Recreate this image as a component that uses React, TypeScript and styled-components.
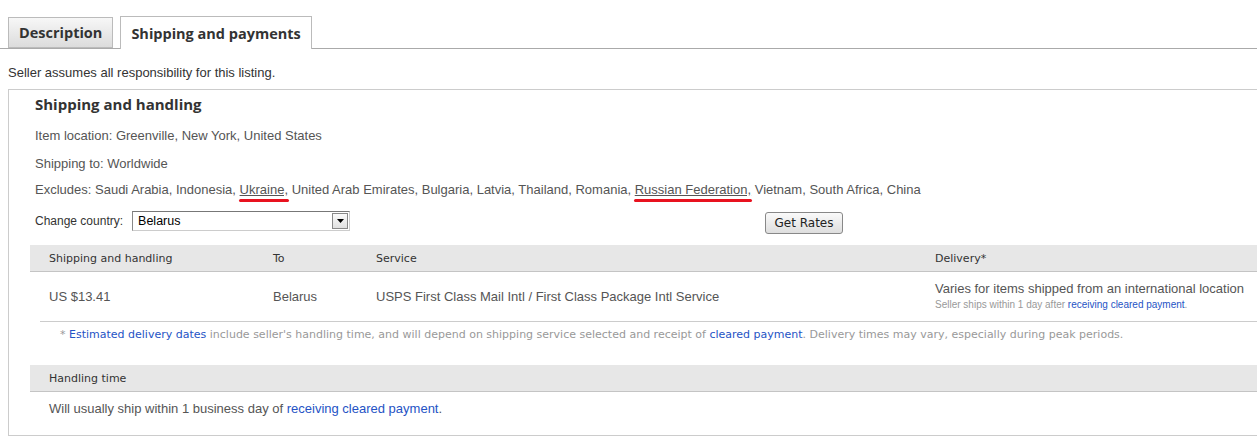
import React from 'react';
import styled, { createGlobalStyle } from 'styled-components';

const GlobalStyle = createGlobalStyle`
  html, body {
    margin: 0;
    padding: 0;
    background: #fff;
    overflow: hidden;
  }
  body {
    font-family: "Liberation Sans", Arial, sans-serif;
    font-size: 13px;
    color: #333;
  }
`;

const Page = styled.div`
  width: 1257px;
  padding-top: 16px;
`;

const TabBar = styled.div`
  display: flex;
  align-items: flex-end;
  gap: 7px;
  padding-left: 8px;
  border-bottom: 1px solid #aaa;
  height: 32px;
`;

const Tab = styled.div<{ $active?: boolean }>`
  height: ${p => (p.$active ? '33px' : '31px')};
  margin-bottom: ${p => (p.$active ? '-1px' : '0')};
  box-sizing: border-box;
  padding: 0 10px;
  display: flex;
  align-items: center;
  border: 1px solid #bbb;
  border-bottom: ${p => (p.$active ? 'none' : '1px solid #bbb')};
  background: ${p => (p.$active ? '#fff' : 'linear-gradient(#f7f7f7, #dcdcdc)')};
  font-family: "Open Sans", "DejaVu Sans", sans-serif;
  font-weight: 700;
  font-size: 14.5px;
  color: #333;
  cursor: pointer;
`;

const Notice = styled.p`
  margin: 16px 0 0 8px;
  line-height: 16px;
  color: #333;
`;

const Box = styled.div`
  margin: 8px 0 0 8px;
  width: 1280px;
  height: 347px;
  box-sizing: border-box;
  border: 1px solid #ccc;
  padding: 0 0 0 21px;
`;

const Info = styled.div`
  padding-left: 5px;
`;

const Heading = styled.h2`
  margin: 4px 0 0;
  line-height: 20px;
  font-family: "Open Sans", "DejaVu Sans", sans-serif;
  font-weight: 700;
  font-size: 15px;
  color: #333;
`;

const Line = styled.p`
  margin: 0;
  height: 26px;
  line-height: 16px;
  padding-top: 8px;
  box-sizing: border-box;
  color: #555;
`;

const FirstLine = styled(Line)`
  padding-top: 14px;
  height: 34px;
`;

const Excluded = styled.span`
  position: relative;
  text-decoration: underline;
  text-underline-offset: 1px;

  &::after {
    content: '';
    position: absolute;
    left: -1px;
    right: -1px;
    bottom: -5px;
    height: 3px;
    border-radius: 2px;
    background: #e8121f;
  }
`;

const CountryRow = styled.div`
  display: grid;
  grid-template-columns: 730px auto;
  justify-content: start;
  align-items: start;
  margin-top: 11px;
`;

const CountryField = styled.label`
  display: flex;
  align-items: center;
  gap: 9px;
  color: #333;
  font-size: 12px;
`;

const Select = styled.div`
  width: 218px;
  height: 20px;
  box-sizing: border-box;
  border: 1px solid #ccc;
  border-top-color: #777;
  border-left-color: #888;
  display: flex;
  align-items: center;
  justify-content: space-between;
  padding-left: 5px;
  color: #000;
  font-size: 12.5px;
`;

const SelectArrow = styled.div`
  width: 16px;
  height: 16px;
  margin-right: 1px;
  box-sizing: border-box;
  border: 1px solid #888;
  background: linear-gradient(#fafafa, #e0e0e0);
  display: flex;
  align-items: center;
  justify-content: center;
`;

const Button = styled.button`
  justify-self: start;
  margin-top: 1px;
  width: 78px;
  height: 22px;
  padding: 0;
  border: 1px solid #888;
  border-radius: 3px;
  background: linear-gradient(#fafafa, #dedede);
  font-family: "DejaVu Sans", Tahoma, sans-serif;
  font-size: 12px;
  color: #222;
`;

const Table = styled.div`
  margin-top: 11px;
`;

const HeaderRow = styled.div<{ $cols?: string }>`
  display: grid;
  grid-template-columns: ${p => p.$cols || '1fr'};
  height: 27px;
  box-sizing: border-box;
  background: #e7e7e7;
  border-bottom: 1px solid #c4c4c4;
  align-items: center;
  font-family: "DejaVu Sans", Verdana, sans-serif;
  font-size: 11px;
  color: #333;
  padding-left: 19px;
`;

const Cell = styled.div`
  padding-top: 1px;
`;

const DataRow = styled.div`
  display: grid;
  grid-template-columns: 224px 103px 559px 1fr;
  height: 49px;
  align-items: center;
  border-bottom: 1px solid #ccc;
  margin-left: 10px;
  padding-left: 9px;
  color: #555;
`;

const Delivery = styled.div`
  display: flex;
  flex-direction: column;
  gap: 3px;
  margin-top: -3px;
`;

const SubNote = styled.span`
  font-size: 10px;
  color: #999;
`;

const Link = styled.a`
  color: #2553c5;
  text-decoration: none;
`;

const Footnote = styled.p`
  margin: 0;
  padding: 6px 0 0 30px;
  line-height: 14px;
  font-family: "DejaVu Sans", Verdana, sans-serif;
  font-size: 11px;
  color: #999;
`;

const HandlingSection = styled.div`
  margin-top: 23px;
`;

const HandlingText = styled.p`
  margin: 0;
  padding: 9px 0 0 19px;
  line-height: 16px;
  color: #555;
`;

const excludes = [
  'Saudi Arabia', 'Indonesia', 'Ukraine', 'United Arab Emirates', 'Bulgaria', 'Latvia',
  'Thailand', 'Romania', 'Russian Federation', 'Vietnam', 'South Africa', 'China',
];
const marked = ['Ukraine', 'Russian Federation'];

export default function App() {
  return (
    <Page>
      <GlobalStyle />
      <TabBar>
        <Tab>Description</Tab>
        <Tab $active>Shipping and payments</Tab>
      </TabBar>

      <Notice>Seller assumes all responsibility for this listing.</Notice>

      <Box>
        <Info>
          <Heading>Shipping and handling</Heading>
          <FirstLine>Item location: Greenville, New York, United States</FirstLine>
          <Line>Shipping to: Worldwide</Line>
          <Line>
            Excludes:{' '}
            {excludes.map((c, i) => {
              const last = i === excludes.length - 1;
              const label = last ? c : c + ',';
              return (
                <React.Fragment key={c}>
                  {marked.includes(c) ? <Excluded>{label}</Excluded> : label}
                  {last ? '' : ' '}
                </React.Fragment>
              );
            })}
          </Line>
          <CountryRow>
            <CountryField>
              Change country:
              <Select>
                Belarus
                <SelectArrow>
                  <svg width="7" height="4" viewBox="0 0 7 4">
                    <path d="M0 0h7L3.5 4z" fill="#000" />
                  </svg>
                </SelectArrow>
              </Select>
            </CountryField>
            <Button>Get Rates</Button>
          </CountryRow>
        </Info>

        <Table>
          <HeaderRow $cols="224px 103px 559px 1fr">
            <Cell>Shipping and handling</Cell>
            <Cell>To</Cell>
            <Cell>Service</Cell>
            <Cell>Delivery*</Cell>
          </HeaderRow>
          <DataRow>
            <div>US $13.41</div>
            <div>Belarus</div>
            <div>USPS First Class Mail Intl / First Class Package Intl Service</div>
            <Delivery>
              <span>Varies for items shipped from an international location</span>
              <SubNote>
                Seller ships within 1 day after <Link href="#">receiving cleared payment</Link>.
              </SubNote>
            </Delivery>
          </DataRow>
          <Footnote>
            * <Link href="#">Estimated delivery dates</Link> include seller's handling time, and will
            depend on shipping service selected and receipt of <Link href="#">cleared payment</Link>.
            Delivery times may vary, especially during peak periods.
          </Footnote>
        </Table>

        <HandlingSection>
          <HeaderRow>
            <Cell>Handling time</Cell>
          </HeaderRow>
          <HandlingText>
            Will usually ship within 1 business day of{' '}
            <Link href="#">receiving cleared payment</Link>.
          </HandlingText>
        </HandlingSection>
      </Box>
    </Page>
  );
}
